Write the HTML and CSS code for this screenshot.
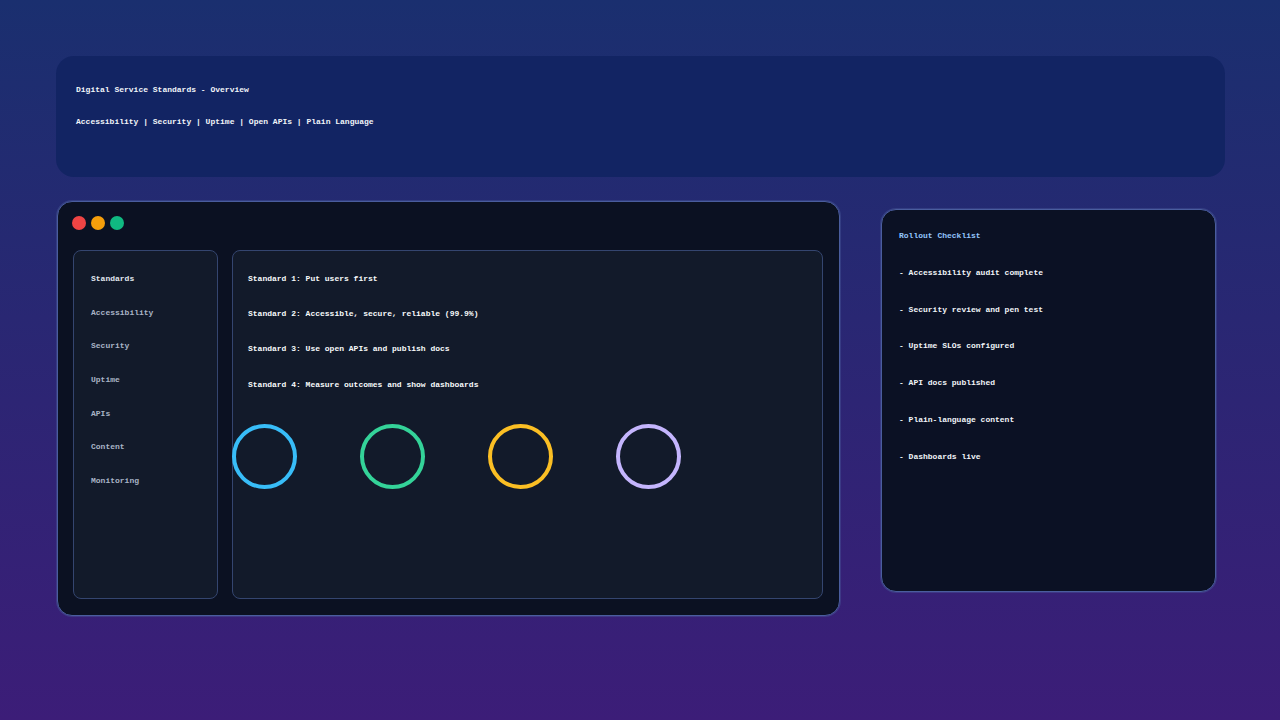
FILE: index.html
```html
<!DOCTYPE html>
<html lang="en">
<head>
<meta charset="utf-8">
<title>Digital Service Standards</title>
<link rel="stylesheet" href="styles.css">
</head>
<body>
<header class="hero">
  <p class="hero-line">Digital Service Standards - Overview</p>
  <p class="hero-line">Accessibility | Security | Uptime | Open APIs | Plain Language</p>
</header>
<div class="content">
  <section class="window">
    <div class="dots">
      <span class="dot dot-red"></span>
      <span class="dot dot-amber"></span>
      <span class="dot dot-green"></span>
    </div>
    <div class="panes">
      <nav class="sidebar">
        <span class="nav-item nav-active">Standards</span>
        <span class="nav-item">Accessibility</span>
        <span class="nav-item">Security</span>
        <span class="nav-item">Uptime</span>
        <span class="nav-item">APIs</span>
        <span class="nav-item">Content</span>
        <span class="nav-item">Monitoring</span>
      </nav>
      <main class="main">
        <p class="standard">Standard 1: Put users first</p>
        <p class="standard">Standard 2: Accessible, secure, reliable (99.9%)</p>
        <p class="standard">Standard 3: Use open APIs and publish docs</p>
        <p class="standard">Standard 4: Measure outcomes and show dashboards</p>
        <div class="rings">
          <span class="ring ring-blue"></span>
          <span class="ring ring-green"></span>
          <span class="ring ring-amber"></span>
          <span class="ring ring-violet"></span>
        </div>
      </main>
    </div>
  </section>
  <aside class="checklist">
    <h2 class="check-title">Rollout Checklist</h2>
    <p class="check-item">- Accessibility audit complete</p>
    <p class="check-item">- Security review and pen test</p>
    <p class="check-item">- Uptime SLOs configured</p>
    <p class="check-item">- API docs published</p>
    <p class="check-item">- Plain-language content</p>
    <p class="check-item">- Dashboards live</p>
  </aside>
</div>
</body>
</html>
```
FILE: styles.css
```css
* { box-sizing: border-box; margin: 0; padding: 0; }
html, body { height: 720px; overflow: hidden; }
body {
  padding: 56px 55px 0 56px;
  background: linear-gradient(180deg, #1a2f6f 0%, #3c1d78 100%);
  font-family: "Liberation Mono", monospace;
  font-size: 8px;
  font-weight: 700;
  color: #f8fafc;
}
.hero {
  height: 121px;
  padding: 29px 20px 0;
  border-radius: 18px;
  background: #122463;
  display: flex;
  flex-direction: column;
  gap: 23px;
}
.hero-line { line-height: 9px; color: #f1f5f9; }
.content {
  display: flex;
  align-items: flex-start;
  margin-top: 24px;
}
.window {
  width: 783px;
  height: 415px;
  margin-left: 1px;
  padding: 14px 15px 0;
  border: 1px solid #4a5d9e;
  box-shadow: 0 0 0 1px rgba(74, 93, 158, 0.4);
  border-radius: 15px;
  background: #0b1122;
}
.dots { display: flex; gap: 5px; height: 14px; margin-left: -1px; }
.dot { width: 14px; height: 14px; border-radius: 50%; }
.dot-red { background: #ef4444; }
.dot-amber { background: #f59e0b; }
.dot-green { background: #10b981; }
.panes {
  display: flex;
  gap: 14px;
  margin-top: 20px;
  height: 349px;
}
.sidebar, .main {
  border: 1px solid #34456f;
  border-radius: 8px;
  background: #121a2a;
}
.sidebar {
  width: 145px;
  padding: 23px 17px 0;
  display: flex;
  flex-direction: column;
  gap: 24.67px;
}
.nav-item { line-height: 9px; color: #a9b4c6; }
.nav-active { color: #e2e8f0; }
.main {
  width: 591px;
  padding: 23px 15px 0;
  display: flex;
  flex-direction: column;
  align-items: flex-start;
}
.standard { line-height: 9px; margin-bottom: 26.2px; color: #f8fafc; }
.rings {
  display: flex;
  gap: 63px;
  margin: 9px 0 0 -16px;
}
.ring {
  width: 65px;
  height: 65px;
  border: 4px solid;
  border-radius: 50%;
}
.ring-blue { border-color: #38bdf8; }
.ring-green { border-color: #34d399; }
.ring-amber { border-color: #fbbf24; }
.ring-violet { border-color: #c4b5fd; }
.checklist {
  width: 335px;
  height: 383px;
  margin: 8px 0 0 41px;
  padding: 21px 17px 0;
  border: 1px solid #4a5d9e;
  box-shadow: 0 0 0 1px rgba(74, 93, 158, 0.4);
  border-radius: 15px;
  background: #0b1124;
  display: flex;
  flex-direction: column;
  gap: 27.8px;
}
.check-title { font-size: 8px; line-height: 9px; color: #93c5fd; }
.check-item { line-height: 9px; color: #f1f5f9; }
```
